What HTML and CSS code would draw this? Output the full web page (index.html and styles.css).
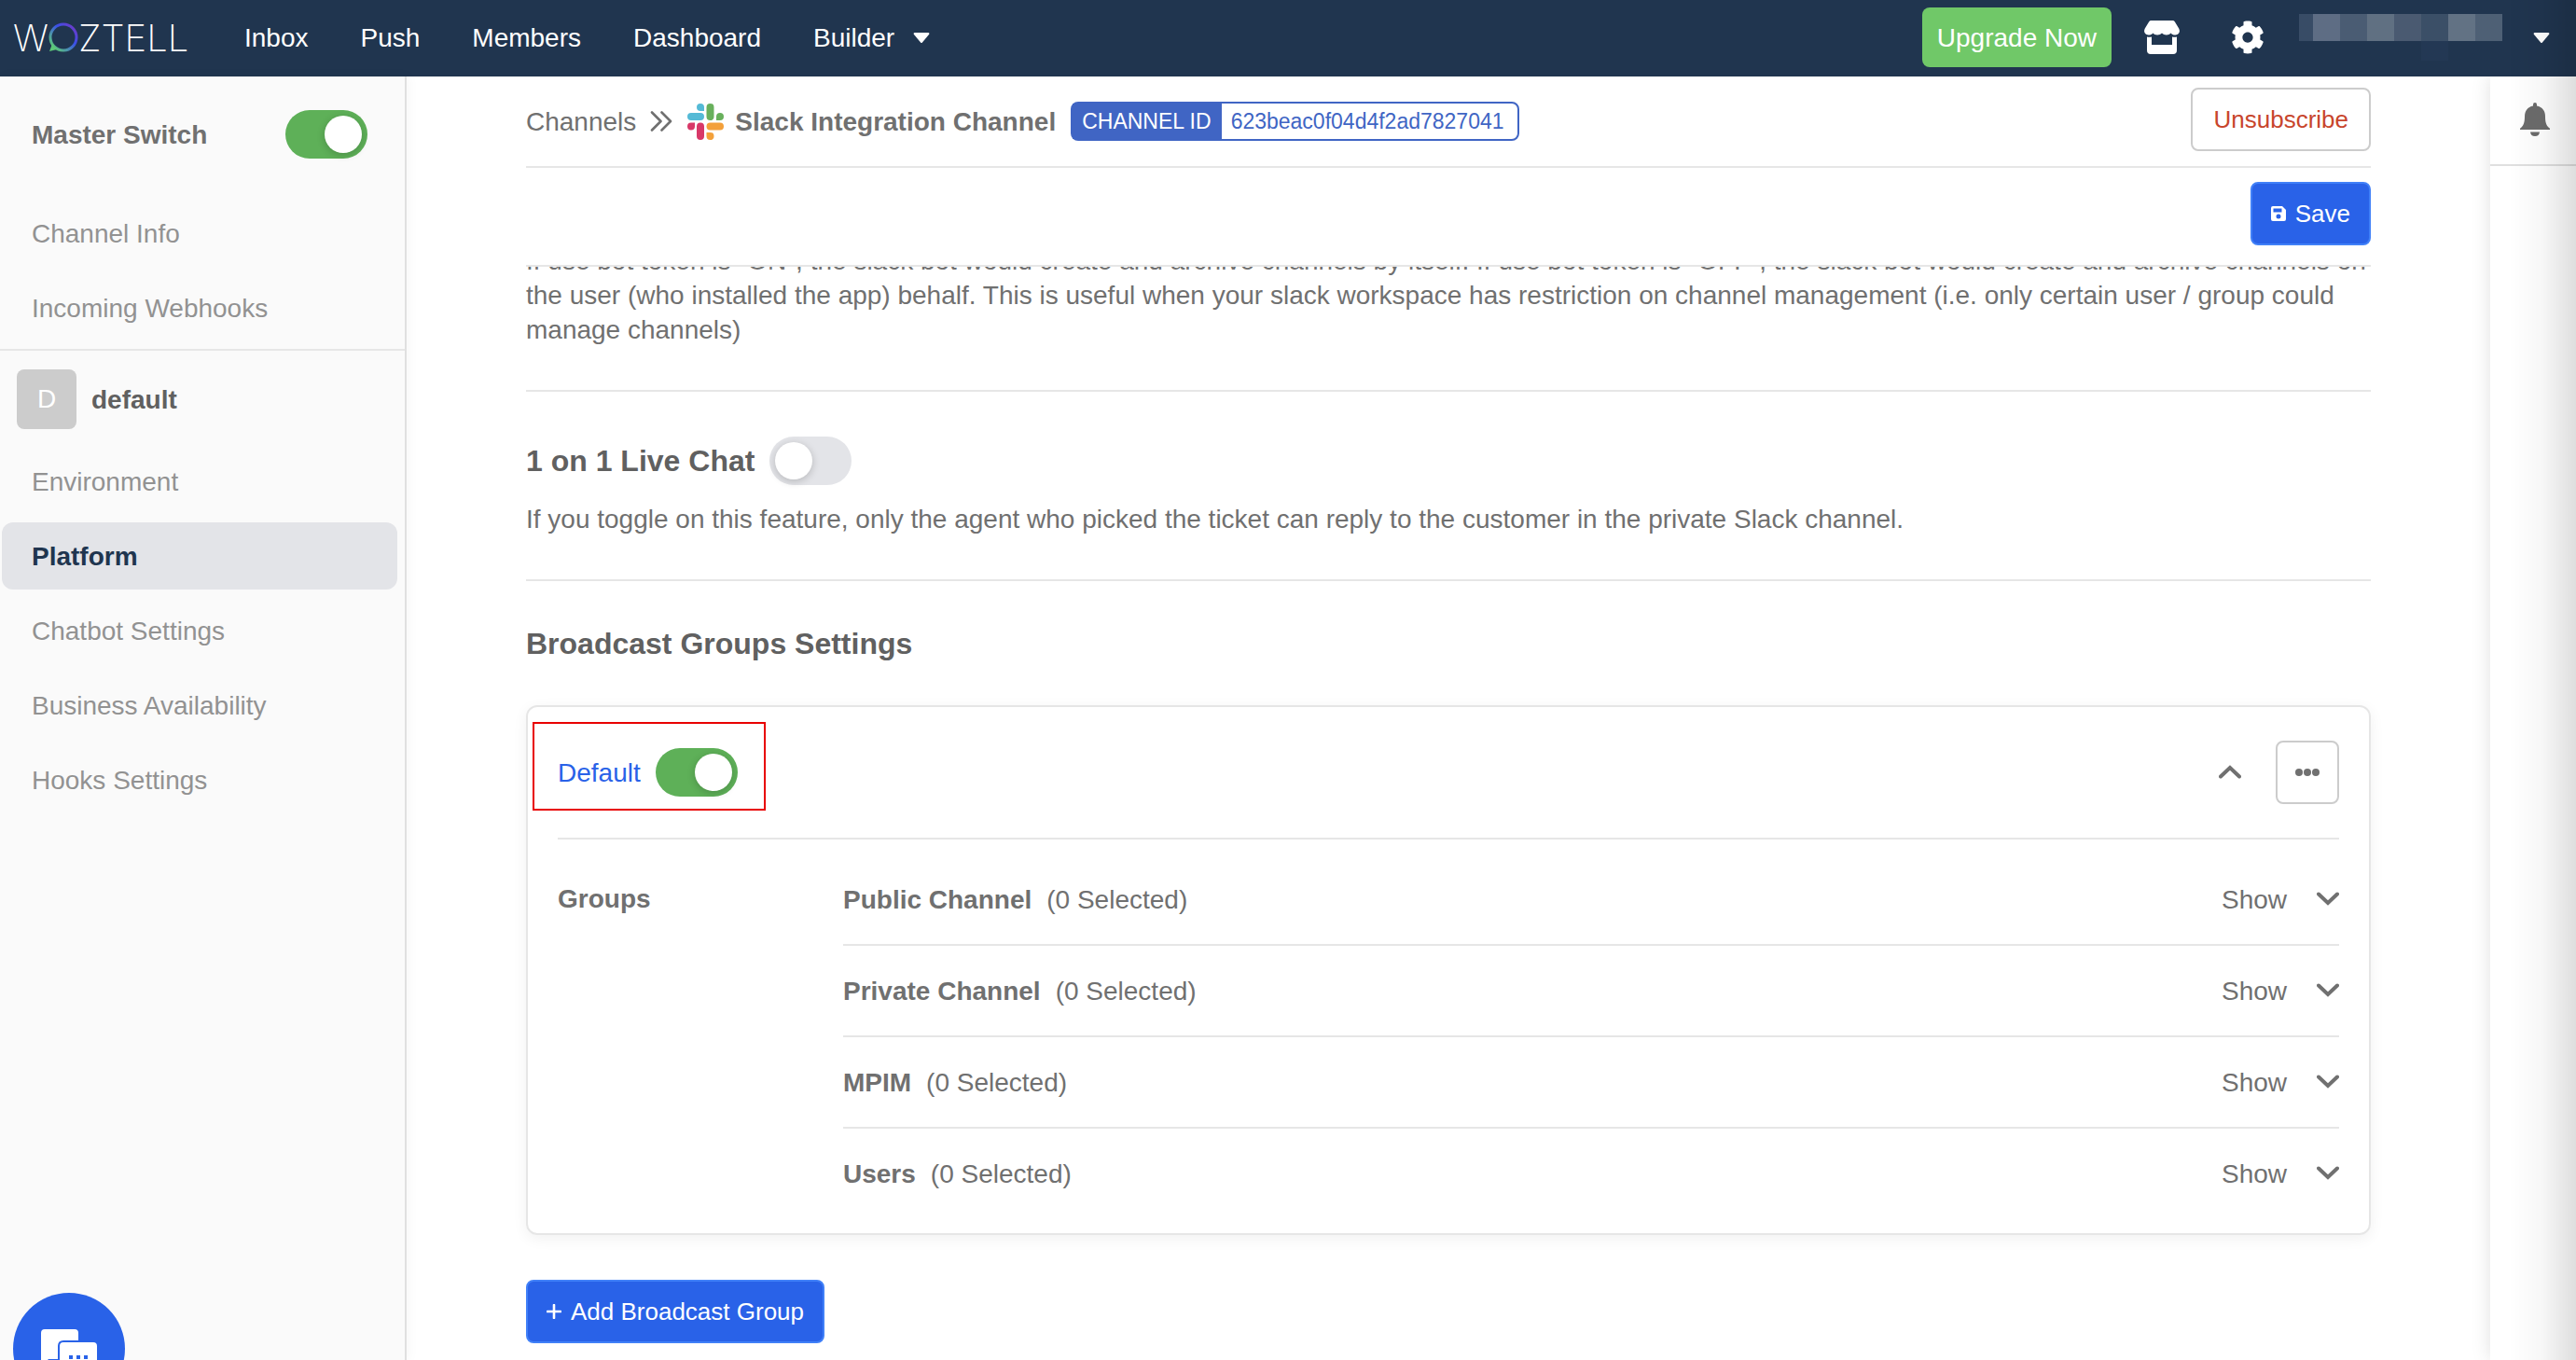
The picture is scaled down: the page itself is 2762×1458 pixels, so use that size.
FILE: index.html
```html
<!DOCTYPE html>
<html lang="en">
<head>
<meta charset="utf-8">
<title>Woztell – Platform settings</title>
<link rel="stylesheet" href="styles.css">
</head>
<body>
<header class="topbar">
  <a class="logo" href="#" aria-label="Woztell">
    <span>W</span>
    <svg class="logo-ring" viewBox="0 0 32 32" aria-hidden="true">
      <defs>
        <linearGradient id="ring" x1="0" y1="1" x2="1" y2="0">
          <stop offset="0.1" stop-color="#5cc878"/>
          <stop offset="0.35" stop-color="#4a8fb0"/>
          <stop offset="0.6" stop-color="#3a4fe8"/>
          <stop offset="1" stop-color="#7a35c0"/>
        </linearGradient>
      </defs>
      <circle cx="16" cy="16" r="14" fill="none" stroke="url(#ring)" stroke-width="3"/>
      <path d="M4 23 L1 31 L9 29 Z" fill="#5cc878"/>
    </svg>
    <span>ZTELL</span>
  </a>
  <nav class="mainnav" aria-label="Main">
    <a href="#">Inbox</a>
    <a href="#">Push</a>
    <a href="#">Members</a>
    <a href="#">Dashboard</a>
    <a class="has-menu" href="#">Builder
      <svg class="caret" viewBox="0 0 18 12" aria-hidden="true"><path d="M1.500 0h15q1.500.5.7 1.800L9.900 10.500q-.9 1-1.800 0L.8 1.800Q0 .5 1.500 0z"/></svg>
    </a>
  </nav>
  <div class="tools">
    <button class="upgrade" type="button">Upgrade Now</button>
    <button class="icon-btn" type="button" aria-label="Store">
      <svg class="store" viewBox="0 0 38 36" fill="#fff" aria-hidden="true">
        <path d="M7.500 0h23q1.500 0 2.300 1.300l4.400 7.200c1.700 3.200.4 6.500-3.600 7-2 .2-3.700-.5-4.900-2-1.200 1.300-2.800 2-4.800 2s-3.700-.7-4.900-2c-1.200 1.300-2.800 2-4.900 2s-3.600-.7-4.800-2c-1.200 1.500-2.900 2.200-4.900 2-4-.5-5.300-3.800-3.600-7l4.400-7.200Q6 0 7.500 0z"/>
        <path d="M3 17.500q2.500.7 5 0V26h22v-8.500q2.500.7 5 0V32q0 4-4 4H7q-4 0-4-4z"/>
      </svg>
    </button>
    <button class="icon-btn" type="button" aria-label="Settings">
      <svg class="gear" viewBox="0 0 512 512" fill="#fff" aria-hidden="true"><path d="M487.400 315.700l-42.600-24.600c4.300-23.200 4.300-47 0-70.200l42.600-24.600c4.900-2.800 7.100-8.600 5.500-14-11.100-35.600-30-67.800-54.700-94.600-3.800-4.100-10-5.100-14.800-2.300L380.800 110c-17.900-15.400-38.500-27.300-60.800-35.100V25.800c0-5.600-3.900-10.500-9.400-11.700-36.700-8.200-74.300-7.800-109.200 0-5.500 1.200-9.400 6.100-9.400 11.700V75c-22.200 7.900-42.800 19.800-60.800 35.100L88.700 85.500c-4.900-2.800-11-1.900-14.800 2.300-24.700 26.700-43.600 58.900-54.700 94.600-1.700 5.400.6 11.200 5.500 14L67.300 221c-4.300 23.200-4.300 47 0 70.200l-42.600 24.600c-4.900 2.800-7.100 8.600-5.500 14 11.100 35.600 30 67.800 54.700 94.600 3.800 4.100 10 5.100 14.800 2.300l42.600-24.600c17.900 15.400 38.500 27.300 60.800 35.100v49.200c0 5.600 3.900 10.500 9.400 11.700 36.700 8.200 74.300 7.800 109.200 0 5.500-1.200 9.400-6.100 9.400-11.700v-49.200c22.200-7.900 42.800-19.800 60.800-35.100l42.600 24.600c4.900 2.800 11 1.900 14.800-2.300 24.700-26.700 43.600-58.900 54.700-94.600 1.500-5.500-.7-11.300-5.600-14.100zM256 336c-44.100 0-80-35.900-80-80s35.900-80 80-80 80 35.900 80 80-35.900 80-80 80z"/></svg>
    </button>
    <button class="account" type="button" aria-label="Account menu">
      <svg class="redacted" viewBox="0 0 218 50" shape-rendering="crispEdges" aria-hidden="true">
        <path fill="#384c66" d="M0 0h15v29H0z"/><path fill="#5e6d84" d="M15 0h29v29H15z"/><path fill="#4a5c73" d="M44 0h29v29H44z"/><path fill="#607082" d="M73 0h29v29H73z"/><path fill="#4a5a71" d="M102 0h29v29h-29z"/><path fill="#3b4f67" d="M131 0h29v29h-29z"/><path fill="#627284" d="M160 0h29v29h-29z"/><path fill="#4e6075" d="M189 0h29v29h-29z"/><path fill="#233854" d="M131 29h29v21h-29z"/>
      </svg>
      <svg class="caret" viewBox="0 0 18 12" aria-hidden="true"><path d="M1.500 0h15q1.500.5.7 1.800L9.900 10.500q-.9 1-1.800 0L.8 1.800Q0 .5 1.500 0z"/></svg>
    </button>
  </div>
</header>

<div class="layout">
  <aside class="sidebar">
    <div class="master">
      <label for="master">Master Switch</label>
      <input class="toggle" type="checkbox" id="master" checked>
    </div>
    <nav class="sidenav" aria-label="Channel">
      <a href="#">Channel Info</a>
      <a href="#">Incoming Webhooks</a>
    </nav>
    <div class="env"><span class="avatar">D</span><strong>default</strong></div>
    <nav class="sidenav" aria-label="Environment">
      <a href="#">Environment</a>
      <a class="active" href="#" aria-current="page">Platform</a>
      <a href="#">Chatbot Settings</a>
      <a href="#">Business Availability</a>
      <a href="#">Hooks Settings</a>
    </nav>
  </aside>

  <main class="main">
    <div class="crumbs">
      <a href="#">Channels</a>
      <svg class="angles" viewBox="0 0 24 22" aria-hidden="true"><path d="M2 1.500 11.500 11 2 20.500M12.500 1.500 22 11l-9.500 9.500" fill="none" stroke="#707070" stroke-width="2.600" stroke-linecap="round" stroke-linejoin="round"/></svg>
      <svg class="slack" viewBox="0 0 39 39" aria-hidden="true">
        <path fill="#54bad6" d="M14 0a4 4 0 0 1 4 4v4h-4a4 4 0 0 1 0-8zM4 10h10a4 4 0 0 1 0 8H4a4 4 0 0 1 0-8z"/>
        <path fill="#68b05c" d="M24.500 0a4 4 0 0 1 4 4v10a4 4 0 0 1-8 0V4a4 4 0 0 1 4-4zM35 10a4 4 0 0 1 0 8h-4v-4a4 4 0 0 1 4-4z"/>
        <path fill="#d83868" d="M4 28.500a4 4 0 0 1 0-8h4v4a4 4 0 0 1-4 4zM14 20.500a4 4 0 0 1 4 4V35a4 4 0 0 1-8 0V24.500a4 4 0 0 1 4-4z"/>
        <path fill="#f3a03a" d="M24.500 20.500H35a4 4 0 0 1 0 8H24.500a4 4 0 0 1 0-8zM20.500 31h4a4 4 0 1 1-4 4z"/>
      </svg>
      <strong>Slack Integration Channel</strong>
      <span class="badge"><span class="badge-key">CHANNEL ID</span><span class="badge-value">623beac0f04d4f2ad7827041</span></span>
      <button class="btn btn-danger" type="button">Unsubscribe</button>
    </div>
    <div class="actions">
      <button class="btn btn-primary" type="button">
        <svg class="disk" viewBox="0 0 16 16" aria-hidden="true"><path fill="#fff" fill-rule="evenodd" d="M2 0h10l4 4v10q0 2-2 2H2q-2 0-2-2V2q0-2 2-2zM2.500 2.500v4h9v-4zM8 8.500a2.500 2.500 0 1 0 0 5 2.500 2.500 0 0 0 0-5z"/></svg>
        Save
      </button>
    </div>
    <div class="scroller">
      <section class="section section-scrolled">
        <p>If use bot token is "ON", the slack bot would create and archive channels by itself. If use bot token is "OFF", the slack bot would create and archive channels on the user (who installed the app) behalf. This is useful when your slack workspace has restriction on channel management (i.e. only certain user / group could manage channels)</p>
      </section>
      <section class="section">
        <div class="section-head">
          <h2><label for="livechat">1 on 1 Live Chat</label></h2>
          <input class="toggle" type="checkbox" id="livechat">
        </div>
        <p>If you toggle on this feature, only the agent who picked the ticket can reply to the customer in the private Slack channel.</p>
      </section>
      <section class="section">
        <h2>Broadcast Groups Settings</h2>
        <div class="card">
          <div class="card-head">
            <label class="group-name" for="group-default">Default</label>
            <input class="toggle" type="checkbox" id="group-default" checked>
            <span class="highlight"></span>
            <button class="plain push" type="button" aria-label="Collapse"><svg class="chev" viewBox="0 0 24 16" aria-hidden="true"><path d="M2 12.500 12 3l10 9.500"/></svg></button>
            <button class="btn btn-more" type="button" aria-label="More"><svg viewBox="0 0 26 8" aria-hidden="true"><circle cx="4" cy="4" r="4"/><circle cx="13" cy="4" r="4"/><circle cx="22" cy="4" r="4"/></svg></button>
          </div>
          <div class="groups">
            <strong class="groups-label">Groups</strong>
            <ul>
              <li><strong>Public Channel</strong><span>(0 Selected)</span><button class="plain push" type="button">Show<svg class="chev" viewBox="0 0 24 16" aria-hidden="true"><path d="M2 2.500 12 12l10-9.500"/></svg></button></li>
              <li><strong>Private Channel</strong><span>(0 Selected)</span><button class="plain push" type="button">Show<svg class="chev" viewBox="0 0 24 16" aria-hidden="true"><path d="M2 2.500 12 12l10-9.500"/></svg></button></li>
              <li><strong>MPIM</strong><span>(0 Selected)</span><button class="plain push" type="button">Show<svg class="chev" viewBox="0 0 24 16" aria-hidden="true"><path d="M2 2.500 12 12l10-9.500"/></svg></button></li>
              <li><strong>Users</strong><span>(0 Selected)</span><button class="plain push" type="button">Show<svg class="chev" viewBox="0 0 24 16" aria-hidden="true"><path d="M2 2.500 12 12l10-9.500"/></svg></button></li>
            </ul>
          </div>
        </div>
        <button class="btn btn-primary" type="button">
          <svg class="disk" viewBox="0 0 16 16" aria-hidden="true"><path d="M8 1v14M1 8h14" stroke="#fff" stroke-width="2.600" stroke-linecap="round"/></svg>
          Add Broadcast Group
        </button>
      </section>
    </div>
  </main>

  <aside class="rail">
    <button class="bell" type="button" aria-label="Notifications">
      <svg viewBox="0 0 32 36" fill="#6c6c6c" aria-hidden="true"><path d="M16 0q2 0 2 2v1.500c6 1.200 9 5.500 9 11.500 0 6 1 9 3.500 11.500 2.300 1.500 1.500 2.500 1.500 2.500H0s-.8-1 1.500-2.500C4 24 5 21 5 15 5 9 8 4.700 14 3.500V2q0-2 2-2z"/><path d="M11 31.500h10q-.5 4.500-5 4.500t-5-4.500z"/></svg>
    </button>
  </aside>
</div>

<button class="chat" type="button" aria-label="Open chat">
  <svg viewBox="0 0 60 50" aria-hidden="true">
    <path fill="#fff" d="M4 0h32q4 0 4 4v8H24q-6 0-6 6v14H8l-8 8V4q0-4 4-4z"/>
    <path fill="#fff" d="M24 14h32q4 0 4 4v32l-8-8H24q-4 0-4-4V18q0-4 4-4z"/>
    <path fill="#2962e8" d="M30 28h4v4h-4zM38 28h4v4h-4zM46 28h4v4h-4z"/>
  </svg>
</button>
<div class="edge-shade"></div>
</body>
</html>
```
FILE: styles.css
```css
* { box-sizing: border-box; }

body {
  margin: 0;
  min-height: 100vh;
  display: flex;
  flex-direction: column;
  background: #fff;
  color: #707070;
  font: 28px/37px "Liberation Sans", Arial, sans-serif;
}

a { color: inherit; text-decoration: none; }
button { font: inherit; color: inherit; border: 0; padding: 0; background: none; cursor: pointer; }
svg { display: block; flex: none; }
p, h2, ul { margin: 0; padding: 0; }

/* Top bar */
.topbar {
  display: flex;
  align-items: center;
  height: 82px;
  padding: 0 28px 2px 14px;
  background: #20354f;
  color: #fff;
}
.logo {
  display: flex;
  align-items: center;
  width: 192px;
  font-family: Inter, sans-serif;
  font-size: 40px;
  font-weight: 200;
}
.logo-ring { width: 32px; height: 32px; }
.mainnav { display: flex; gap: 56px; margin-left: 56px; }
.has-menu { display: flex; align-items: center; gap: 20px; }
.caret { width: 18px; height: 12px; fill: #fff; margin-top: 2px; }
.tools { display: flex; align-items: center; margin-left: auto; }
.upgrade { height: 64px; padding: 0 16px; border-radius: 8px; background: #70c868; }
.icon-btn { margin-left: 35px; }
.icon-btn + .icon-btn { margin-left: 55px; }
.store { width: 38px; height: 36px; }
.gear { width: 36px; height: 36px; }
.account { display: flex; align-items: center; gap: 33px; margin-left: 37px; }
.redacted { width: 218px; height: 50px; }

/* Page columns */
.layout { flex: 1; display: flex; }

/* Sidebar */
.sidebar {
  width: 436px;
  flex: none;
  background: #fafafa;
  border-right: 2px solid #e0e0e0;
  box-shadow: 2px 0 12px rgba(0, 0, 0, 0.04);
}
.master {
  display: flex;
  align-items: center;
  justify-content: space-between;
  height: 124px;
  padding: 0 40px 0 34px;
  font-weight: bold;
}
.sidenav { display: grid; gap: 8px; padding: 8px 8px 8px 2px; }
.sidenav a { padding: 18px 32px 17px; border-radius: 12px; color: #929292; }
.sidenav .active { background: #e3e4e8; color: #20354f; font-weight: bold; }
.env {
  display: flex;
  align-items: center;
  gap: 16px;
  padding: 20px 18px 12px;
  border-top: 2px solid #e6e6e6;
  color: #606060;
}
.avatar {
  width: 64px;
  height: 64px;
  border-radius: 8px;
  background: #ccc;
  color: #fff;
  line-height: 64px;
  text-align: center;
}

/* Toggle switch */
.toggle {
  appearance: none;
  flex: none;
  width: 88px;
  height: 52px;
  margin: 0;
  padding: 6px;
  border-radius: 26px;
  background: #e3e4e8;
}
.toggle::before {
  content: "";
  display: block;
  width: 40px;
  height: 40px;
  border-radius: 50%;
  background: #fff;
  box-shadow: 0 2px 8px rgba(0, 0, 0, 0.2);
}
.toggle:checked { background: #5eb058; }
.toggle:checked::before { margin-left: auto; }

/* Buttons */
.btn {
  display: flex;
  align-items: center;
  gap: 10px;
  height: 68px;
  padding: 0 20px;
  border: 2px solid #ccc;
  border-radius: 8px;
  background: #fff;
  font-size: 26px;
}
.btn-danger { padding: 0 22px; color: #c8452c; }
.btn-primary { background: #2962e8; border-color: #4080f8; color: #fff; }
.btn-more { width: 68px; padding: 0 19px; }
.btn-more svg { width: 26px; height: 8px; fill: #707070; }
.disk { width: 16px; height: 16px; }
.plain { display: flex; align-items: center; gap: 32px; }
.push { margin-left: auto; }
.chev {
  width: 24px;
  height: 16px;
  fill: none;
  stroke: #707070;
  stroke-width: 4;
  stroke-linecap: round;
}

/* Main column */
.main { flex: 1; min-width: 0; padding: 0 128px; }
.crumbs {
  display: flex;
  align-items: center;
  height: 98px;
  border-bottom: 2px solid #e6e6e6;
}
.angles { width: 24px; height: 22px; margin: 0 16px 0 15px; }
.slack { width: 39px; height: 39px; margin-right: 12px; }
.badge {
  display: flex;
  margin-left: 16px;
  border: 2px solid #4065c4;
  border-radius: 8px;
  font-size: 23px;
  line-height: 38px;
}
.badge-key { padding: 0 11px 0 10px; background: #4065c4; color: #fff; }
.badge-value { padding: 0 14px 0 10px; color: #4065c4; }
.crumbs .btn { margin-left: auto; margin-bottom: 4px; }
.actions {
  display: flex;
  justify-content: flex-end;
  padding: 15px 0 21px;
  border-bottom: 2px solid #e6e6e6;
}
/* Room at the sides lets the card shadow show outside the column */
.scroller { overflow: hidden; margin: 0 -24px; padding: 0 24px 16px; }
.section { padding: 48px 0 46px; }
.section + .section { border-top: 2px solid #e6e6e6; }
.section-scrolled { margin-top: -25px; padding-top: 0; }
.section:last-child { padding-bottom: 0; }
.section-head { display: flex; align-items: center; gap: 16px; margin-bottom: 18px; }
h2 { font-size: 32px; line-height: 38px; color: #606060; }

/* Broadcast group card */
.card {
  margin: 47px 0 48px;
  border: 2px solid #e6e6e6;
  border-radius: 12px;
  padding: 0 32px 16px;
  box-shadow: 0 4px 16px rgba(0, 0, 0, 0.06);
}
.card-head {
  position: relative;
  display: flex;
  align-items: center;
  gap: 16px;
  height: 142px;
  border-bottom: 2px solid #e6e6e6;
}
.group-name { color: #2962e8; }
.highlight {
  position: absolute;
  left: -27px;
  top: 16px;
  width: 250px;
  height: 95px;
  border: 2px solid #e80000;
  pointer-events: none;
}
.btn-more { margin-left: 21px; }
.groups { display: flex; padding-top: 16px; }
.groups-label { width: 306px; flex: none; line-height: 96px; }
.groups ul { flex: 1; list-style: none; }
.groups li { display: flex; align-items: center; gap: 16px; height: 96px; }
.groups li + li { height: 98px; border-top: 2px solid #e6e6e6; }

/* Right rail */
.rail { width: 92px; flex: none; box-shadow: 0 0 20px rgba(0, 0, 0, 0.12); clip-path: inset(0 0 0 -24px); }
.bell {
  display: flex;
  justify-content: center;
  width: 100%;
  height: 96px;
  padding: 28px 0 0 4px;
  border-bottom: 2px solid #e0e0e0;
}
.bell svg { width: 32px; height: 36px; }

/* Floating chat launcher */
.chat {
  position: fixed;
  left: 14px;
  bottom: -48px;
  width: 120px;
  height: 120px;
  padding: 8px 0 0;
  border-radius: 50%;
  background: #2962e8;
}
.chat svg { width: 60px; height: 50px; margin: 0 auto; overflow: visible; }

.edge-shade {
  position: fixed;
  top: 0;
  right: 0;
  bottom: 0;
  width: 72px;
  background: linear-gradient(to right, rgba(0, 0, 0, 0), rgba(0, 0, 0, 0.03) 50%, rgba(0, 0, 0, 0.13));
  pointer-events: none;
}
```
